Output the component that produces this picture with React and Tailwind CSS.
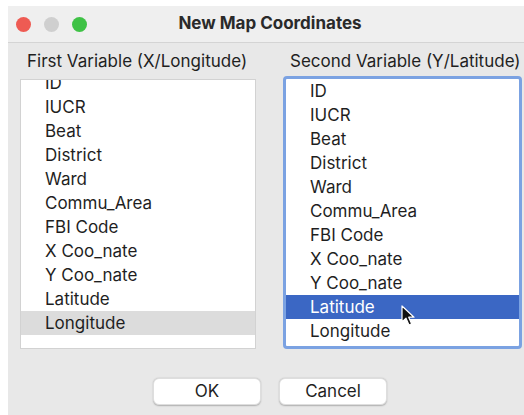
import { useState } from "react";

const FIELDS = [
  "ID",
  "IUCR",
  "Beat",
  "District",
  "Ward",
  "Commu_Area",
  "FBI Code",
  "X Coo_nate",
  "Y Coo_nate",
  "Latitude",
  "Longitude",
];

const Pointer = () => (
  <svg width="16" height="22" viewBox="0 0 16 22" className="absolute left-[115px] top-[226px]">
    <path
      d="M1 1 L1 17 L5 13.2 L8 20 L10.6 18.8 L7.7 12.2 L13 12.2 Z"
      fill="#111"
      stroke="#fff"
      strokeWidth="1.2"
      strokeLinejoin="round"
    />
  </svg>
);

const FieldList = ({ selected, focused, offset }) => (
  <div
    className={`relative overflow-hidden bg-white ${
      focused
        ? "w-[239px] h-[273px] border-[3px] border-[#7ba2e2] rounded-[4px]"
        : "w-[236px] h-[270px] border border-[#d2d2d2]"
    }`}
  >
    <div style={{ marginTop: offset }}>
      {FIELDS.map((f) => {
        const on = f === selected;
        return (
          <div
            key={f}
            className={`h-[24px] flex items-center pl-[24px] pt-[2px] text-[17px] ${
              on
                ? focused
                  ? "bg-[#3b67c4] text-white"
                  : "bg-[#dcdcdc] text-[#1f1f1f]"
                : "text-[#1f1f1f]"
            }`}
          >
            {f}
          </div>
        );
      })}
    </div>
    {focused && <Pointer />}
  </div>
);

const DialogButton = ({ children }) => (
  <button className="w-[108px] h-[27px] rounded-[6px] bg-white text-[17px] text-[#1f1f1f] shadow-[0_0.5px_1.5px_rgba(0,0,0,0.25)] border border-[#dedede]">
    {children}
  </button>
);

export default function App() {
  const [xVar] = useState("Longitude");
  const [yVar] = useState("Latitude");

  return (
    <div
      className="w-[524px] h-[415px] overflow-hidden bg-white pt-[6px] pl-[8px]"
      style={{ fontFamily: "Inter, 'Noto Sans', sans-serif" }}
    >
      <div className="w-[524px] h-[409px] bg-[#e8e8e8] flex flex-col">
        {/* title bar */}
        <div className="relative h-[37px] shrink-0 bg-[#efefef] border-b border-[#d4d4d4] flex items-center pl-[8px] gap-[13px]">
          <span className="w-[15px] h-[15px] rounded-full bg-[#ee5b53]" />
          <span className="w-[15px] h-[15px] rounded-full bg-[#cfcfcf]" />
          <span className="w-[15px] h-[15px] rounded-full bg-[#3fc246]" />
          <div className="absolute inset-0 flex items-center justify-center text-[17px] font-bold text-[#2a2a2a]">
            New Map Coordinates
          </div>
        </div>

        {/* variable pickers */}
        <div className="flex items-start pl-[12px] pt-[8px]">
          <div className="flex flex-col">
            <div className="h-[20px] pl-[7px] text-[17px] leading-[20px] text-[#1f1f1f] whitespace-nowrap">
              First Variable (X/Longitude)
            </div>
            <div className="mt-[8px]">
              <FieldList selected={xVar} offset={-9} />
            </div>
          </div>
          <div className="flex flex-col ml-[27px]">
            <div className="h-[20px] pl-[7px] text-[17px] leading-[20px] text-[#1f1f1f] whitespace-nowrap">
              Second Variable (Y/Latitude)
            </div>
            <div className="mt-[5px]">
              <FieldList selected={yVar} focused offset={0} />
            </div>
          </div>
        </div>

        {/* actions */}
        <div className="flex justify-center gap-[18px] mt-[29px]">
          <DialogButton>OK</DialogButton>
          <DialogButton>Cancel</DialogButton>
        </div>
      </div>
    </div>
  );
}
